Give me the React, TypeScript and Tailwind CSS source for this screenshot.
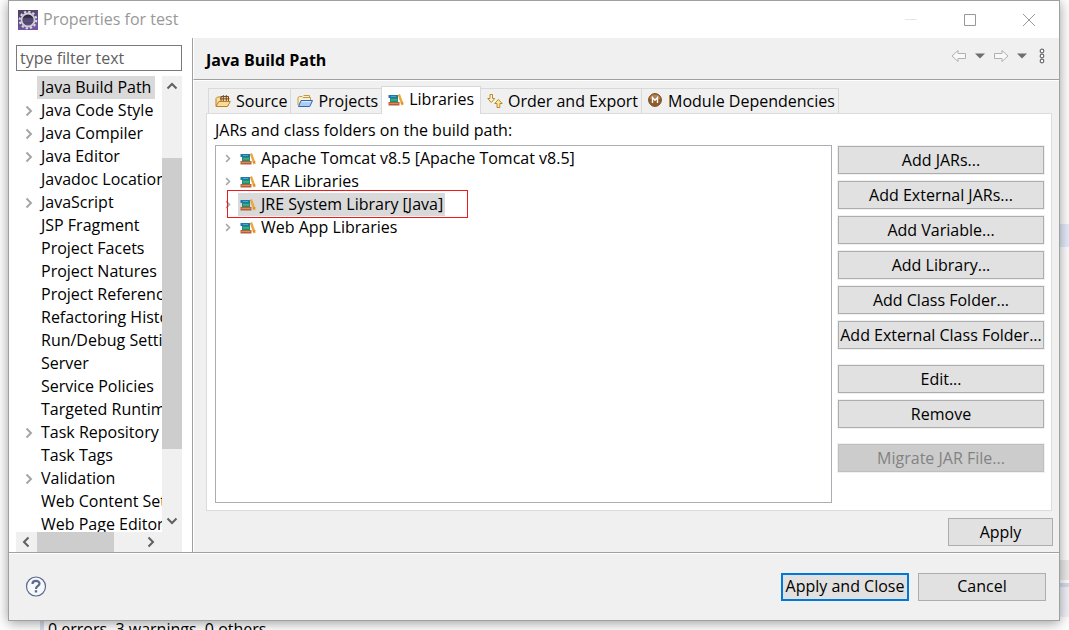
import React, { useState } from "react";

type IconProps = { className?: string };

function BooksIcon({ className = "" }: IconProps) {
  return (
    <svg viewBox="0 0 16 12" className={`h-3 w-4 shrink-0 ${className}`} aria-hidden="true">
      <rect x="0.500" y="1" width="9.500" height="3" fill="#1f78a8" />
      <rect x="3" y="2" width="5" height="1" fill="#4ba6cf" />
      <rect x="2" y="4" width="8" height="4" fill="#1d8f6c" />
      <rect x="3" y="5.400" width="6" height="1" fill="#5cc39c" />
      <rect x="0.500" y="8" width="11" height="3.500" fill="#b5603a" />
      <rect x="1.500" y="9" width="9" height="1" fill="#d98a5e" />
      <path d="M9.800 1 12 0 15.800 10.600 13.500 11.500Z" fill="#efa63a" />
      <path d="M12.900 9.500 15.300 8.600" stroke="#c8741f" strokeWidth="0.800" />
    </svg>
  );
}

function SourceIcon() {
  return (
    <svg viewBox="0 0 16 14" className="h-[14px] w-4 shrink-0" aria-hidden="true">
      <path d="M1 12V4.500L2.500 3H6L7 4.500H13V12Z" fill="#f7dfa0" stroke="#b9822c" />
      <path d="M6 2.500H13.500V7.500H6Z" fill="#f3d9b0" stroke="#7a4a26" />
      <path d="M8.300 1V8M11.300 1V8M5 4.800H14.500" stroke="#7a4a26" />
      <path d="M1 12.500 3.800 7.500H15.300L12.500 12.500Z" fill="#f9dc92" stroke="#b9822c" />
    </svg>
  );
}

function ProjectsIcon() {
  return (
    <svg viewBox="0 0 16 14" className="h-[14px] w-4 shrink-0" aria-hidden="true">
      <path d="M1 11V3.500L2.500 2.500H5L6 3.500H13.500V6.500" fill="#fbf0cf" stroke="#c69a3c" />
      <path d="M6.500 1.500H12.500V3.500" fill="none" stroke="#c69a3c" />
      <path d="M1.500 12.500 4 6.500H15.500L12.800 12.500Z" fill="#a9cdf5" stroke="#3566b0" />
      <path d="M4.700 7.700H14" stroke="#e2f0ff" />
    </svg>
  );
}

function OrderIcon() {
  return (
    <svg viewBox="0 0 16 16" className="h-4 w-4 shrink-0" aria-hidden="true">
      <path d="M3 1.500H5.500V5.500H7.700L4.250 9.500 0.800 5.500H3Z" fill="#fff4c8" stroke="#b98a2b" />
      <path d="M10 14.500H12.800V10.500H15.200L11.400 6.500 7.700 10.500H10Z" fill="#ffe9a8" stroke="#b98a2b" />
    </svg>
  );
}

function ModuleIcon() {
  return (
    <svg viewBox="0 0 14 14" className="mb-[3px] mr-px h-[14px] w-[14px] shrink-0" aria-hidden="true">
      <circle cx="7" cy="7" r="6.400" fill="#8f5c2c" stroke="#7c4d22" />
      <path d="M1.500 6A5.600 5.600 0 0 1 12.500 6Z" fill="#b3824d" />
      <path d="M4.500 10V4.500L7 7.300 9.500 4.500V10" fill="none" stroke="#fff" strokeWidth="1.400" />
    </svg>
  );
}

function GearIcon() {
  return (
    <svg viewBox="0 0 20 20" className="h-5 w-5 shrink-0" aria-hidden="true">
      <defs>
        <linearGradient id="tile" x1="0" y1="0" x2="0.300" y2="1">
          <stop offset="0" stopColor="#4b3f60" />
          <stop offset="1" stopColor="#7656a3" />
        </linearGradient>
        <linearGradient id="core" x1="0" y1="0" x2="0" y2="1">
          <stop offset="0" stopColor="#211c38" />
          <stop offset="1" stopColor="#64558a" />
        </linearGradient>
      </defs>
      <rect width="20" height="20" fill="url(#tile)" />
      <circle cx="10" cy="10" r="8.300" fill="none" stroke="#dddae2" strokeWidth="2" strokeDasharray="2.300 2.045" />
      <circle cx="10" cy="10" r="6.500" fill="url(#core)" stroke="#d2d0d6" strokeWidth="1.800" />
      <path d="M4.500 9H15.500M4.500 11H15.500" stroke="#8a80a5" strokeWidth="0.500" />
    </svg>
  );
}

function Chevron({ className = "" }: IconProps) {
  return (
    <svg viewBox="0 0 8 12" className={`shrink-0 ${className}`} fill="none" stroke="currentColor" aria-hidden="true">
      <path d="M1.500 1.500 6 6 1.500 10.500" strokeWidth="2" />
    </svg>
  );
}

const pages: { name: string; parent?: boolean }[] = [
  { name: "Java Build Path" },
  { name: "Java Code Style", parent: true },
  { name: "Java Compiler", parent: true },
  { name: "Java Editor", parent: true },
  { name: "Javadoc Location" },
  { name: "JavaScript", parent: true },
  { name: "JSP Fragment" },
  { name: "Project Facets" },
  { name: "Project Natures" },
  { name: "Project References" },
  { name: "Refactoring History" },
  { name: "Run/Debug Settings" },
  { name: "Server" },
  { name: "Service Policies" },
  { name: "Targeted Runtimes" },
  { name: "Task Repository", parent: true },
  { name: "Task Tags" },
  { name: "Validation", parent: true },
  { name: "Web Content Settings" },
  { name: "Web Page Editor" },
];

const libraries = [
  "Apache Tomcat v8.5 [Apache Tomcat v8.5]",
  "EAR Libraries",
  "JRE System Library [Java]",
  "Web App Libraries",
];

const actionGroups = [
  ["Add JARs...", "Add External JARs...", "Add Variable...", "Add Library...", "Add Class Folder...", "Add External Class Folder..."],
  ["Edit...", "Remove"],
  ["Migrate JAR File..."],
];

const tabs = [
  { name: "Source", icon: <SourceIcon /> },
  { name: "Projects", icon: <ProjectsIcon /> },
  { name: "Libraries", icon: <BooksIcon /> },
  { name: "Order and Export", icon: <OrderIcon /> },
  { name: "Module Dependencies", icon: <ModuleIcon /> },
];

const buttonStyle =
  "flex h-7 items-center justify-center whitespace-nowrap border border-[#adadad] bg-[#e1e1e1] ring-1 ring-[#f0f0f0] disabled:border-[#bfbfbf] disabled:bg-[#cccccc] disabled:text-[#838383]";

function TitleBar() {
  return (
    <header className="flex h-[37px] shrink-0 items-center pl-[9px] pr-px text-[#999999]">
      <GearIcon />
      <h1 className="ml-[5px] flex-1">Properties for test</h1>
      <button aria-label="Minimize" className="flex h-full w-[58px] items-center justify-center text-[#e5e5e5]">
        <svg viewBox="0 0 12 12" className="h-3 w-3" stroke="currentColor"><path d="M0 5.500H12" /></svg>
      </button>
      <button aria-label="Maximize" className="flex h-full w-[59px] items-center justify-center">
        <svg viewBox="0 0 12 12" className="h-3 w-3" fill="none" stroke="currentColor"><path d="M.5.5H11.500V11.500H.5Z" /></svg>
      </button>
      <button aria-label="Close" className="flex h-full w-[59px] items-center justify-center">
        <svg viewBox="0 0 12 12" className="h-3 w-3" fill="none" stroke="currentColor"><path d="M0 0 12 12M12 0 0 12" /></svg>
      </button>
    </header>
  );
}

function Sidebar() {
  return (
    <aside className="flex w-[183px] shrink-0 flex-col bg-white pl-[7px] pr-[10px] pt-[7px]">
      <input
        aria-label="Filter pages"
        placeholder="type filter text"
        className="mb-[5px] h-[26px] w-full shrink-0 border border-[#7a7a7a] px-[3px] outline-none placeholder:text-[#5f5f5f] placeholder:opacity-100"
      />
      <div className="flex min-h-0 flex-1">
        <nav className="min-w-0 flex-1 overflow-hidden">
          <ul>
            {pages.map((p, i) => (
              <li key={p.name} className="flex h-[23px] items-center whitespace-nowrap">
                <span className="flex w-[21px] shrink-0 pl-[9px] text-[#a6a6a6]">
                  {p.parent && <Chevron className="h-3 w-2" />}
                </span>
                <a href="#page" className={i === 0 ? "bg-[#d9d9d9] px-1" : "px-1"} aria-current={i === 0 ? "page" : undefined}>
                  {p.name}
                </a>
              </li>
            ))}
          </ul>
        </nav>
        <div className="flex w-5 shrink-0 flex-col items-center bg-[#f0f0f0] text-[#606060]">
          <Chevron className="my-1 h-3 w-2 -rotate-90" />
          <div className="grow-[62]" />
          <div className="w-full grow-[291] bg-[#cdcdcd]" />
          <div className="grow-[62]" />
          <Chevron className="mb-[5px] mt-1 h-3 w-2 rotate-90" />
        </div>
      </div>
      <div className="mr-5 flex h-5 shrink-0 items-center bg-[#f0f0f0] text-[#606060] shadow-[20px_0_0_#f0f0f0]">
        <Chevron className="ml-[6px] mr-[7px] h-3 w-2 rotate-180" />
        <div className="h-full grow-[78] bg-[#cdcdcd]" />
        <div className="grow-[26]" />
        <Chevron className="mx-[7px] h-3 w-2" />
      </div>
    </aside>
  );
}

function HistoryTools() {
  return (
    <div className="flex items-center text-[#6d6d72]">
      <button aria-label="Back">
        <svg viewBox="0 0 16 14" className="h-[14px] w-4" fill="#f8f8f8" stroke="#b0b0b0"><path d="M1 7 7 1.500V4.500H14.500V9.500H7V12.500Z" /></svg>
      </button>
      <button aria-label="Back history" className="ml-2">
        <svg viewBox="0 0 10 6" className="h-[6px] w-[10px]" fill="currentColor"><path d="M0 .5H10L5 5.500Z" /></svg>
      </button>
      <button aria-label="Forward" className="ml-2">
        <svg viewBox="0 0 16 14" className="h-[14px] w-4" fill="#f8f8f8" stroke="#b0b0b0"><path d="M15 7 9 1.500V4.500H1.500V9.500H9V12.500Z" /></svg>
      </button>
      <button aria-label="Forward history" className="ml-2">
        <svg viewBox="0 0 10 6" className="h-[6px] w-[10px]" fill="currentColor"><path d="M0 .5H10L5 5.500Z" /></svg>
      </button>
      <button aria-label="View menu" className="ml-3">
        <svg viewBox="0 0 6 16" className="h-4 w-[6px]" fill="#fff" stroke="currentColor" strokeWidth="1.200">
          <circle cx="3" cy="3" r="1.800" /><circle cx="3" cy="8" r="1.800" /><circle cx="3" cy="13" r="1.800" />
        </svg>
      </button>
    </div>
  );
}

export default function App() {
  const [tab, setTab] = useState("Libraries");
  const [selected, setSelected] = useState("JRE System Library [Java]");

  return (
    <div className="flex h-screen flex-col overflow-hidden bg-white font-['Open_Sans','Noto_Sans',sans-serif] text-base leading-[23px] text-black">
      <div className="flex min-h-0 flex-1">
        <div className="w-2 shrink-0" />
        <main className="relative z-10 flex min-w-0 flex-1 flex-col border border-[#a0a0a0] bg-white shadow-[0_2px_12px_rgba(0,0,0,0.4)]">
          <TitleBar />
          <div className="flex min-h-0 flex-1">
            <Sidebar />
            <section className="flex min-w-0 flex-1 flex-col border-l border-[#a0a0a0] bg-[#f0f0f0]">
              <div className="flex h-[42px] shrink-0 items-center border-b border-l border-b-[#a0a0a0] border-l-white pl-3 pr-[14px]">
                <h2 className="flex-1 pt-1 font-bold">Java Build Path</h2>
                <div className="mb-[6px]"><HistoryTools /></div>
              </div>
              <div className="flex min-h-0 flex-1 flex-col border-l border-t border-white pb-[6px] pl-3 pr-[6px] pt-1">
                <div role="tablist" className="flex h-7 shrink-0 items-end pl-[2px]">
                  {tabs.map((t) => (
                    <button
                      key={t.name}
                      role="tab"
                      aria-selected={tab === t.name}
                      onClick={() => setTab(t.name)}
                      className={
                        tab === t.name
                          ? "relative -mb-px -ml-px flex h-7 items-center gap-[5px] whitespace-nowrap border border-b-0 border-[#d9d9d9] bg-white px-[6px] pb-[2px]"
                          : "-ml-px flex h-[25px] items-center gap-[5px] whitespace-nowrap border border-b-0 border-[#d9d9d9] pl-[6px] pr-[3px] first:ml-0"
                      }
                    >
                      {t.icon}
                      {t.name}
                    </button>
                  ))}
                </div>
                <div className="mr-px flex min-h-0 flex-1 flex-col border border-[#dcdcdc] bg-white px-2 pb-[7px] pr-[7px] pt-[5px]">
                  <p className="mb-[3px]">JARs and class folders on the build path:</p>
                  <div className="flex min-h-0 flex-1 gap-[6px]">
                    <ul role="tree" className="min-w-0 flex-1 border border-[#abadb3] pt-px">
                      {libraries.map((name) => (
                        <li
                          key={name}
                          role="treeitem"
                          aria-selected={selected === name}
                          onClick={() => setSelected(name)}
                          className="relative flex h-[23px] items-center whitespace-nowrap pl-2"
                        >
                          <Chevron className="mr-[6px] h-[9px] w-2 text-[#a6a6a6]" />
                          <span className={selected === name ? "flex items-center gap-[5px] bg-[#d9d9d9] px-[2px]" : "flex items-center gap-[5px] px-[2px]"}>
                            <BooksIcon />
                            {name}
                          </span>
                          {name === "JRE System Library [Java]" && (
                            <span className="absolute -top-[3px] left-[11px] h-7 w-[241px] border border-[#f01818]" />
                          )}
                        </li>
                      ))}
                    </ul>
                    <div className="flex w-[206px] shrink-0 flex-col gap-4 pt-px">
                      {actionGroups.map((group) => (
                        <div key={group[0]} className="flex flex-col gap-[7px]">
                          {group.map((label) => (
                            <button key={label} disabled={label.startsWith("Migrate")} className={buttonStyle}>{label}</button>
                          ))}
                        </div>
                      ))}
                    </div>
                  </div>
                </div>
                <button className={`mt-[7px] w-[105px] shrink-0 self-end ${buttonStyle}`}>Apply</button>
              </div>
            </section>
          </div>
          <footer className="flex h-[68px] shrink-0 items-center gap-[9px] border-t border-[#a0a0a0] bg-[#f0f0f0] pl-4 pr-[13px] shadow-[inset_0_1px_0_#fff]">
            <button aria-label="Help" className="mr-auto">
              <svg viewBox="0 0 22 22" className="h-[22px] w-[22px]" fill="none" stroke="#5a6a8c" aria-hidden="true">
                <circle cx="11" cy="10.500" r="9.500" fill="#f7f8fb" strokeWidth="1.200" />
                <path d="M7.500 8C7.500 4 14.500 4 14.500 7.700 14.500 10 11 10 11 13" strokeWidth="2.200" />
                <path d="M11 14.200V16.500" strokeWidth="2.400" />
              </svg>
            </button>
            <button className="flex h-7 w-32 items-center justify-center whitespace-nowrap border-2 border-[#0078d7] bg-[#e1e1e1]">Apply and Close</button>
            <button className={`w-32 ${buttonStyle}`}>Cancel</button>
          </footer>
        </main>
        <div className="flex w-[9px] shrink-0 flex-col">
          <div className="grow-[224]" />
          <div className="grow-[23] bg-[#e4edfc]" />
          <div className="grow-[313]" />
          <div className="grow-[20] bg-[#ececec]" />
          <div className="grow-[3]" />
          <div className="grow-[4] bg-[#d5def0]" />
          <div className="grow-[30] bg-[#f1f3fa]" />
          <div className="grow-[4]" />
        </div>
      </div>
      <div className="ml-10 flex h-[9px] shrink-0 overflow-hidden border-l-4 border-[#d5def0] pl-1">
        <p className="leading-[17px]">0 errors, 3 warnings, 0 others</p>
      </div>
    </div>
  );
}
